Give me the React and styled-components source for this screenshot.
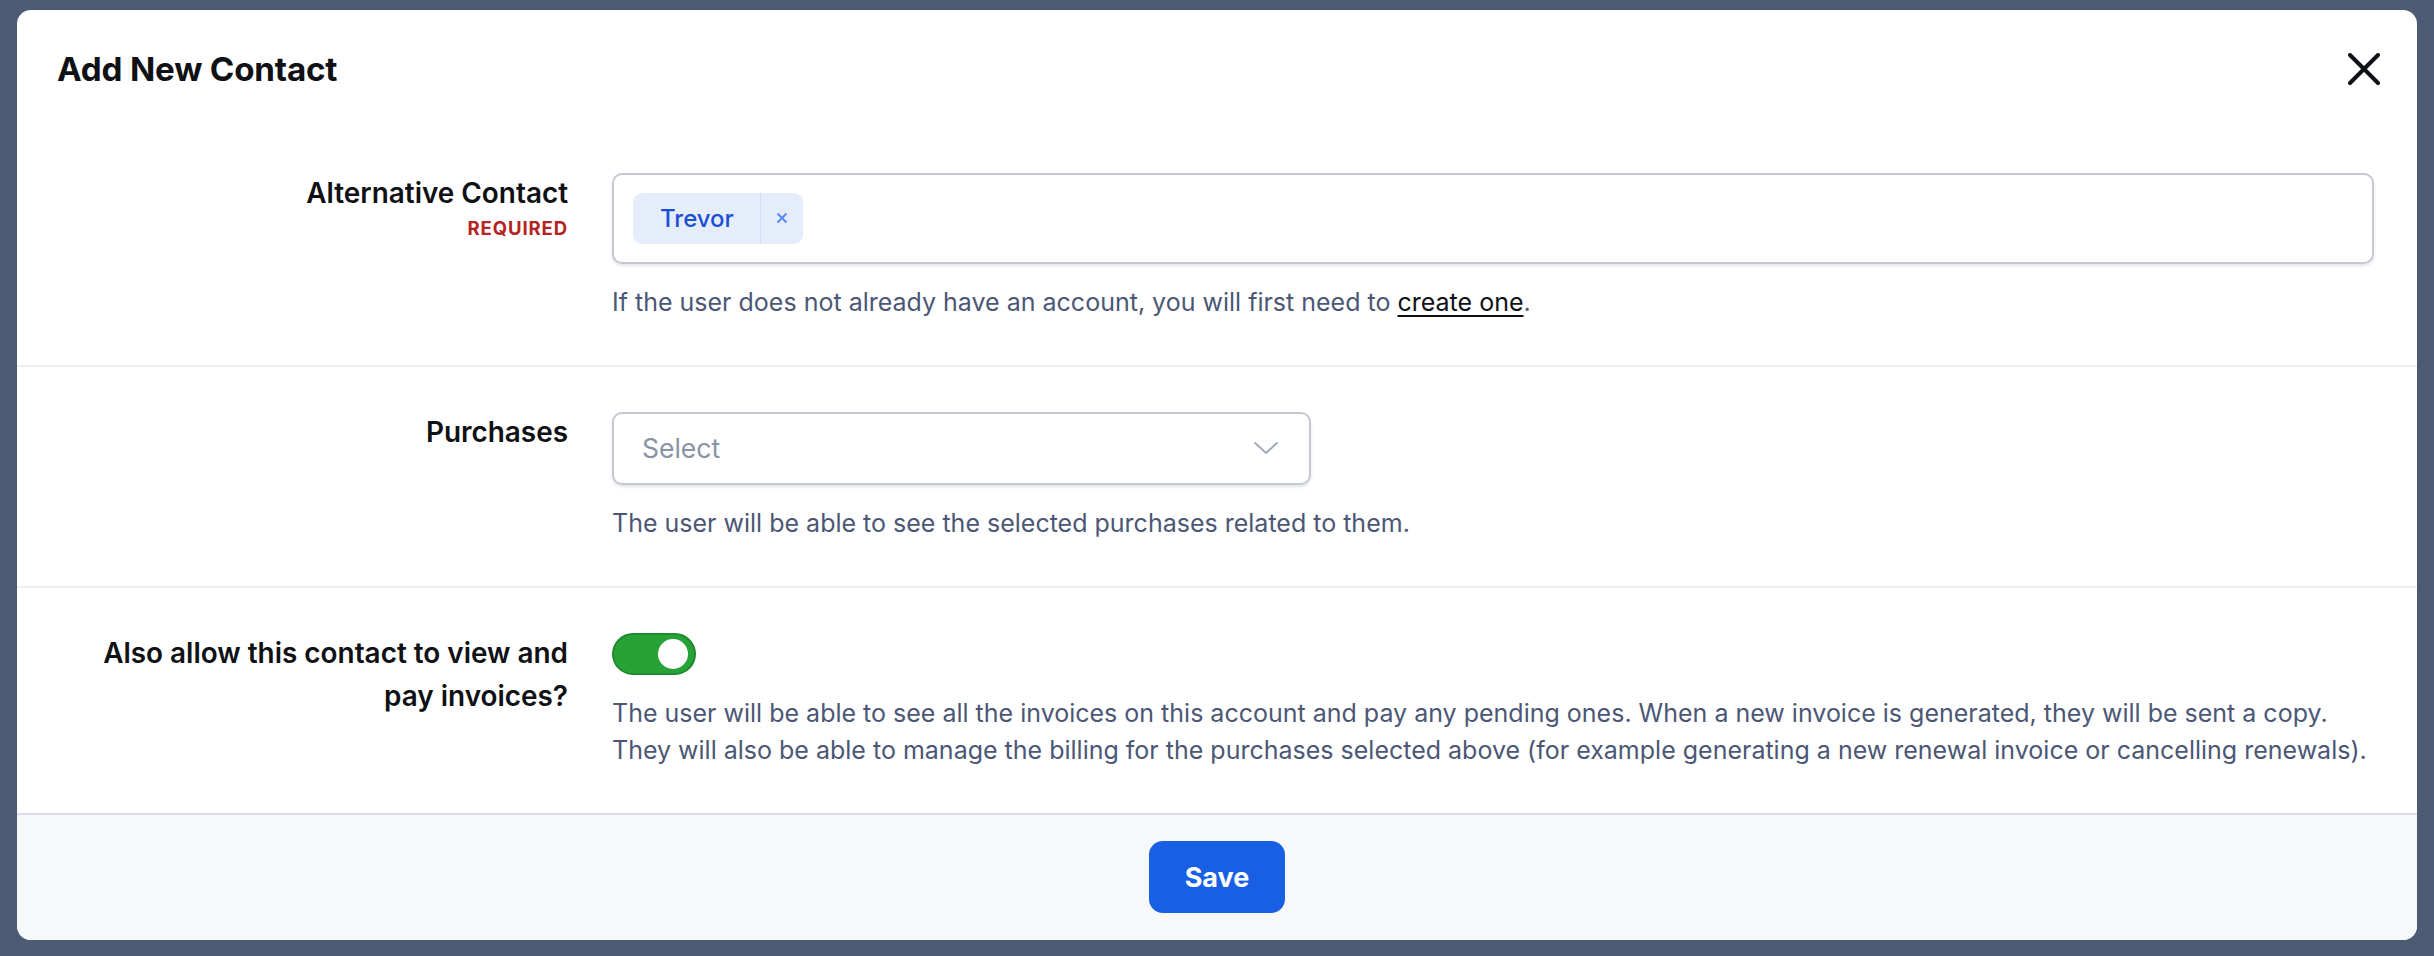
import React, { useState } from "react";
import styled, { createGlobalStyle } from "styled-components";

const GlobalStyle = createGlobalStyle`
  html, body {
    margin: 0;
    padding: 0;
    background: #4c5a74;
  }
  * { box-sizing: border-box; }
`;

const Backdrop = styled.div`
  width: 2434px;
  height: 956px;
  padding: 10px 17px 16px 17px;
  background: #4c5a74;
  font-family: Inter, "Noto Sans", sans-serif;
`;

const Modal = styled.div`
  display: flex;
  flex-direction: column;
  height: 100%;
  background: #ffffff;
  border-radius: 14px;
  overflow: hidden;
`;

const Header = styled.header`
  display: flex;
  align-items: center;
  justify-content: space-between;
  height: 119px;
  padding: 0 37px 0 40px;
`;

const Title = styled.h1`
  margin: 0;
  font-size: 33.2px;
  font-weight: 700;
  color: #0f1115;
  letter-spacing: -0.2px;
`;

const CloseButton = styled.button`
  display: flex;
  align-items: center;
  justify-content: center;
  width: 32px;
  height: 32px;
  padding: 0;
  border: none;
  background: none;
  cursor: pointer;
`;

const Body = styled.div`
  flex: 1;
`;

const Row = styled.div`
  display: grid;
  grid-template-columns: 508px 1fr;
  column-gap: 44px;
  padding: 45px 43px 44px 43px;
  border-bottom: ${(p) => (p.$last ? "none" : "2px solid #eeeff1")};
`;

const LabelCol = styled.div`
  display: flex;
  flex-direction: column;
  align-items: flex-end;
  text-align: right;
`;

const Label = styled.label`
  margin-top: -1px;
  font-size: 27.9px;
  font-weight: 600;
  line-height: 43px;
  color: #0f1115;
`;

const Required = styled.span`
  font-size: 18.5px;
  font-weight: 700;
  line-height: 26px;
  letter-spacing: 0.9px;
  color: #b4231f;
`;

const FieldCol = styled.div`
  display: flex;
  flex-direction: column;
  align-items: flex-start;
  gap: 20px;
`;

const TagInput = styled.div`
  display: flex;
  align-items: center;
  width: 100%;
  height: 91px;
  padding: 0 19px;
  border: 2px solid #c4c8d2;
  border-radius: 10px;
  box-shadow: 0 2px 3px rgba(30, 40, 60, 0.12);
`;

const Chip = styled.div`
  display: flex;
  align-items: stretch;
  height: 51px;
  border-radius: 9px;
  background: #e5edfb;
  overflow: hidden;
`;

const ChipText = styled.span`
  display: flex;
  align-items: center;
  padding: 0 26px 0 27px;
  font-size: 24px;
  font-weight: 500;
  color: #1a4fd6;
`;

const ChipRemove = styled.span`
  display: flex;
  align-items: center;
  justify-content: center;
  width: 43px;
  border-left: 1px solid #d2def5;
  color: #5a8bea;
`;

const SelectBox = styled.div`
  display: flex;
  align-items: center;
  justify-content: space-between;
  width: 699px;
  height: 73px;
  padding: 0 30px 0 28px;
  border: 2px solid #c4c8d2;
  border-radius: 10px;
  box-shadow: 0 2px 3px rgba(30, 40, 60, 0.12);
  font-size: 26.5px;
  color: #8a92a4;
`;

const Help = styled.p`
  margin: 0;
  font-size: 25px;
  line-height: 37px;
  color: #4b5775;
`;

const HelpLink = styled.a`
  color: #0f1115;
  text-decoration: underline;
  text-underline-offset: 4px;
`;

const Toggle = styled.button`
  position: relative;
  width: 84px;
  height: 42px;
  padding: 0;
  border: 2px solid #1f8a30;
  border-radius: 21px;
  background: ${(p) => (p.$on ? "#27a236" : "#d1d5db")};
  cursor: pointer;
`;

const Knob = styled.span`
  position: absolute;
  top: 4px;
  left: ${(p) => (p.$on ? "44px" : "4px")};
  width: 30px;
  height: 30px;
  border-radius: 50%;
  background: #ffffff;
`;

const Footer = styled.footer`
  display: flex;
  align-items: center;
  justify-content: center;
  height: 129px;
  border-top: 2px solid #d8dde9;
  background: #f7f8fa;
`;

const SaveButton = styled.button`
  width: 136px;
  height: 72px;
  border: none;
  border-radius: 14px;
  background: #195fe4;
  color: #ffffff;
  font-family: Inter, "Noto Sans", sans-serif;
  font-size: 27px;
  font-weight: 700;
  cursor: pointer;
`;

const App = () => {
  const [invoices, setInvoices] = useState(true);

  return (
    <>
      <GlobalStyle />
      <Backdrop>
        <Modal>
          <Header>
            <Title>Add New Contact</Title>
            <CloseButton aria-label="Close">
              <svg width="32" height="32" viewBox="0 0 32 32">
                <path d="M2 2 L30 30 M30 2 L2 30" stroke="#0f1115" strokeWidth="4" strokeLinecap="round" />
              </svg>
            </CloseButton>
          </Header>

          <Body>
            <Row>
              <LabelCol>
                <Label>Alternative Contact</Label>
                <Required>REQUIRED</Required>
              </LabelCol>
              <FieldCol>
                <TagInput>
                  <Chip>
                    <ChipText>Trevor</ChipText>
                    <ChipRemove>
                      <svg width="12" height="12" viewBox="0 0 12 12">
                        <path d="M1.5 1.5 L10.5 10.5 M10.5 1.5 L1.5 10.5" stroke="currentColor" strokeWidth="2" />
                      </svg>
                    </ChipRemove>
                  </Chip>
                </TagInput>
                <Help>
                  If the user does not already have an account, you will first need to{" "}
                  <HelpLink href="#">create one</HelpLink>.
                </Help>
              </FieldCol>
            </Row>

            <Row>
              <LabelCol>
                <Label>Purchases</Label>
              </LabelCol>
              <FieldCol>
                <SelectBox>
                  <span>Select</span>
                  <svg width="26" height="14" viewBox="0 0 26 14">
                    <path d="M1.5 1.5 L13 12 L24.5 1.5" fill="none" stroke="#a3a9b6" strokeWidth="2" />
                  </svg>
                </SelectBox>
                <Help>The user will be able to see the selected purchases related to them.</Help>
              </FieldCol>
            </Row>

            <Row $last>
              <LabelCol>
                <Label>
                  Also allow this contact to view and
                  <br />
                  pay invoices?
                </Label>
              </LabelCol>
              <FieldCol>
                <Toggle $on={invoices} onClick={() => setInvoices(!invoices)}>
                  <Knob $on={invoices} />
                </Toggle>
                <Help>
                  The user will be able to see all the invoices on this account and pay any pending ones. When a new
                  invoice is generated, they will be sent a copy.
                  <br />
                  They will also be able to manage the billing for the purchases selected above (for example
                  generating a new renewal invoice or cancelling renewals).
                </Help>
              </FieldCol>
            </Row>
          </Body>

          <Footer>
            <SaveButton>Save</SaveButton>
          </Footer>
        </Modal>
      </Backdrop>
    </>
  );
};

export default App;
